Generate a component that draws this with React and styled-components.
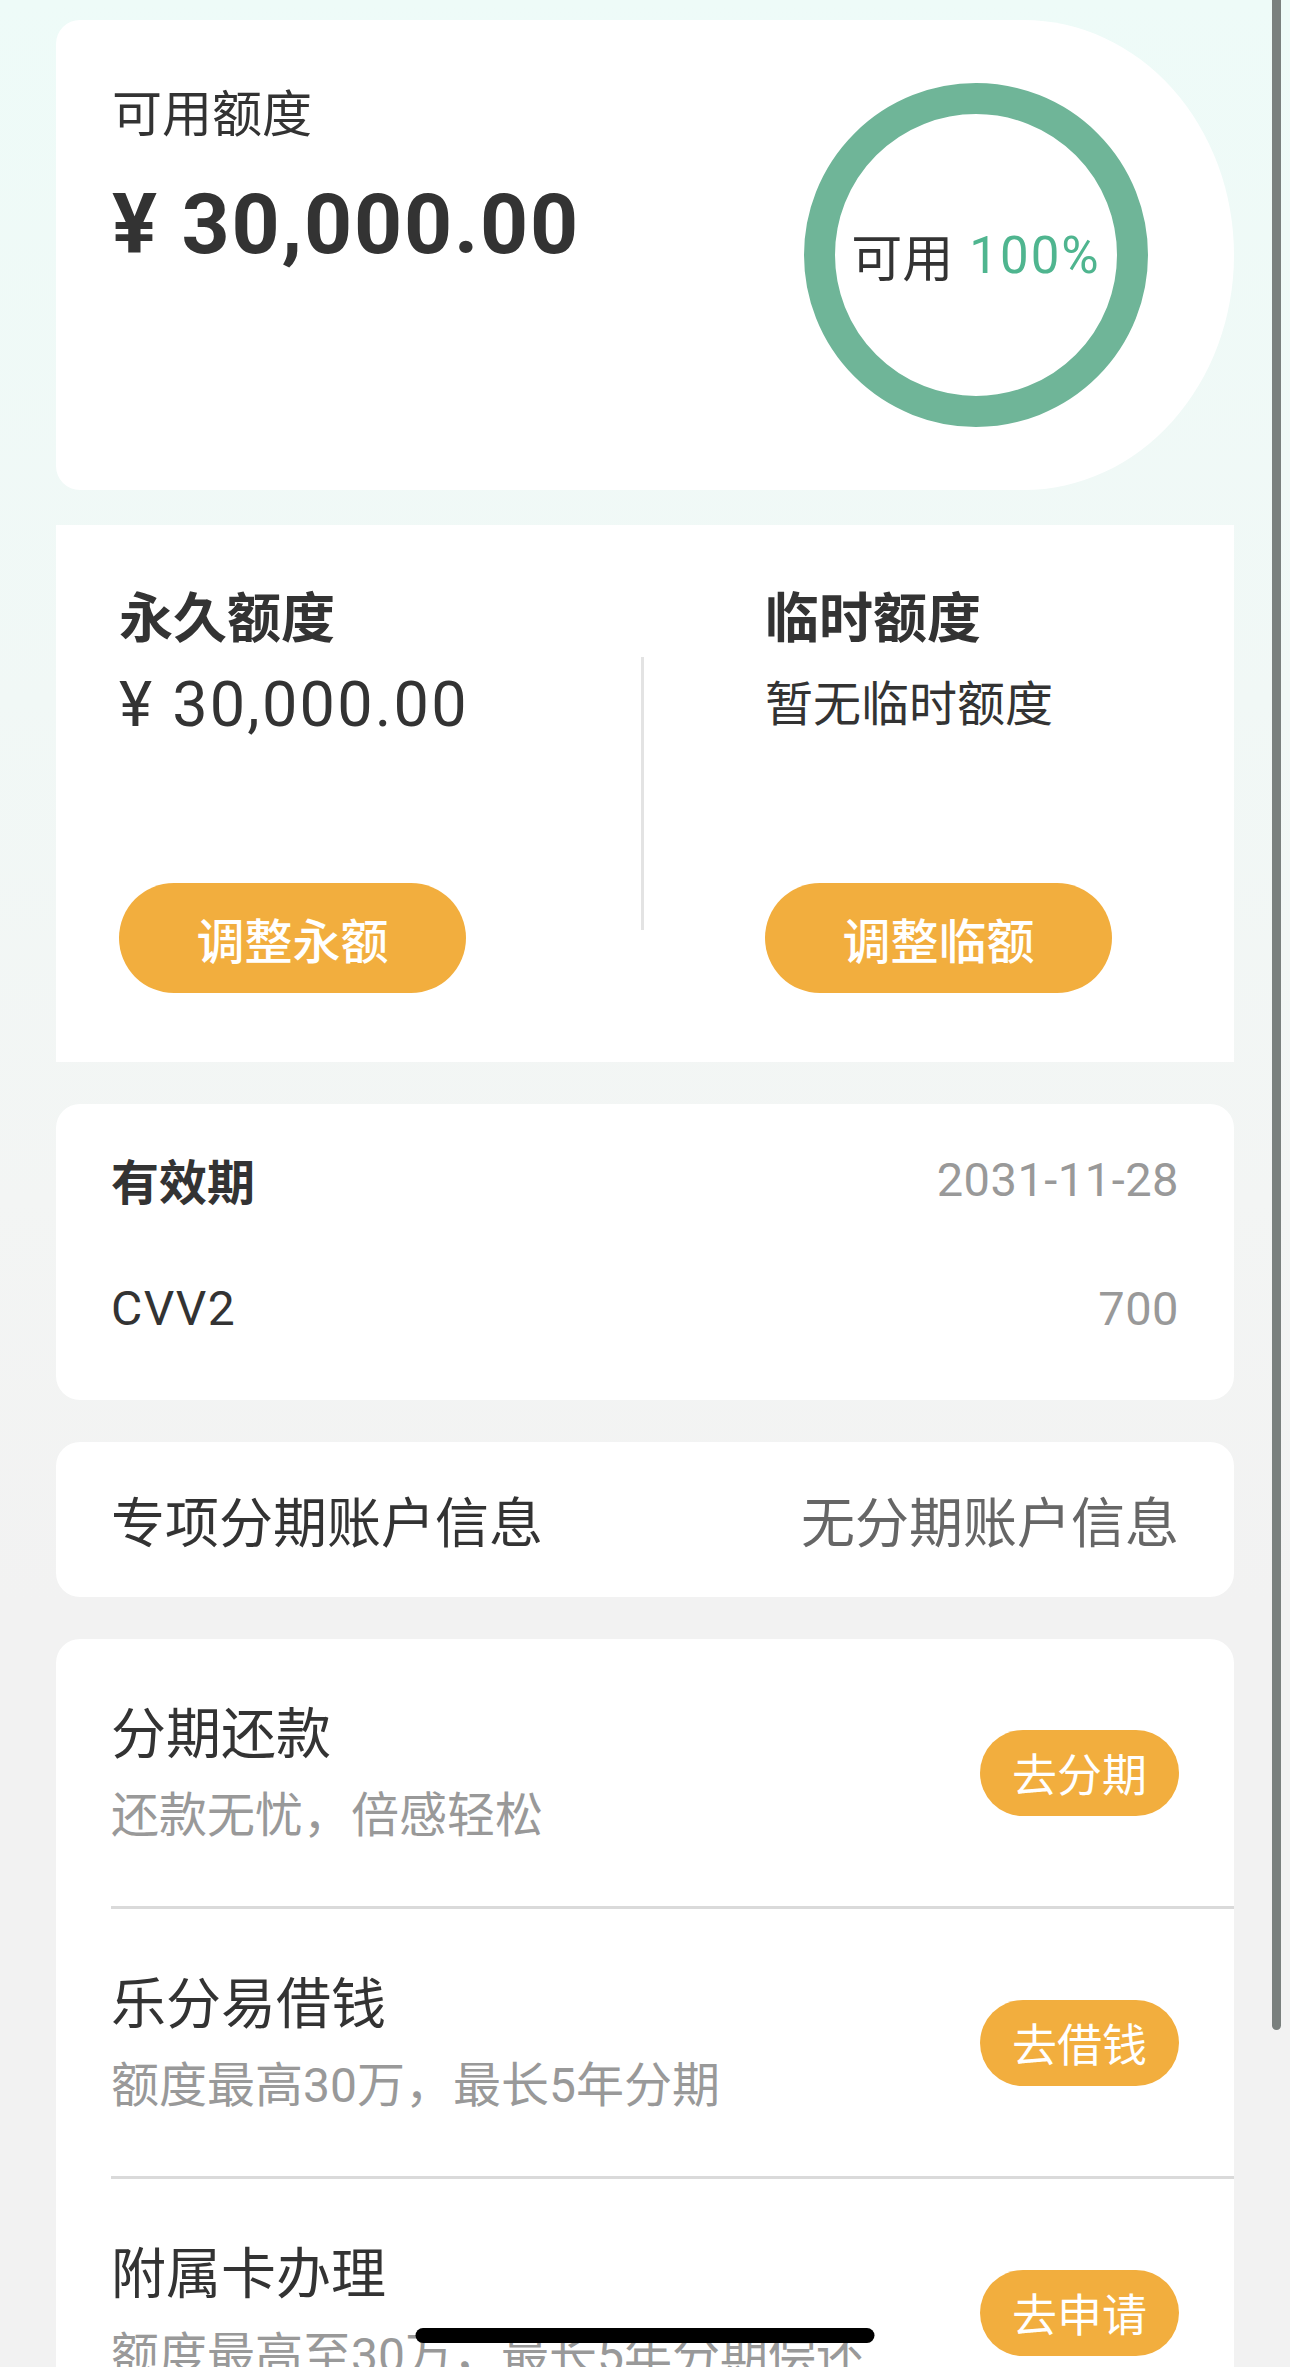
import React from "react";
import styled, { createGlobalStyle } from "styled-components";

const GlobalStyle = createGlobalStyle`
  html, body {
    margin: 0;
    padding: 0;
  }
  body {
    background: #f2f2f2;
    font-family: Roboto, "Noto Sans CJK SC", sans-serif;
    color: #333333;
  }
`;

const ORANGE = "#f2ae3e";

const Page = styled.div`
  position: relative;
  height: 100vh;
  overflow: hidden;
  box-sizing: border-box;
  padding: 20px 56px 0;
  background: linear-gradient(180deg, #eefbf8 0px, #f1f8f6 700px, #f3f5f4 1200px, #f2f2f2 1600px);
`;

const Overview = styled.section`
  height: 470px;
  box-sizing: border-box;
  background: #ffffff;
  border-radius: 24px 210px 210px 24px / 24px 235px 235px 24px;
  display: flex;
  align-items: center;
  justify-content: space-between;
  padding: 0 86px 0 56px;
`;

const OverviewText = styled.div`
  align-self: flex-start;
  padding-top: 60px;
`;

const Label = styled.div`
  font-size: 50px;
  line-height: 70px;
  color: #333333;
`;

const BigAmount = styled.div`
  margin-top: 25px;
  font-size: 84px;
  line-height: 100px;
  font-weight: 700;
  letter-spacing: 1.8px;
  color: #333333;
`;

const Ring = styled.div`
  width: 344px;
  height: 344px;
  box-sizing: border-box;
  border: 31px solid #6fb598;
  border-radius: 50%;
  display: flex;
  align-items: center;
  justify-content: center;
  font-size: 51px;
  color: #333333;
`;

const Percent = styled.span`
  color: #4fb58f;
  margin-left: 16px;
  letter-spacing: 2px;
`;

const LimitCard = styled.section`
  margin-top: 35px;
  height: 537px;
  background: #ffffff;
  display: grid;
  grid-template-columns: 585px 3px 1fr;
  align-items: center;
`;

const LimitColumn = styled.div`
  align-self: stretch;
  display: flex;
  flex-direction: column;
  align-items: flex-start;
  box-sizing: border-box;
  padding: 57px 0 0 ${(p) => p.$inset}px;
`;

const ColTitle = styled.div`
  font-size: 54px;
  line-height: 76px;
  font-weight: 700;
  color: #333333;
`;

const ColValue = styled.div`
  margin-top: 9px;
  font-size: ${(p) => p.$size}px;
  line-height: 76px;
  letter-spacing: ${(p) => p.$spacing || 0}px;
  color: #333333;
`;

const AdjustButton = styled.button`
  margin-top: 140px;
  width: 347px;
  height: 110px;
  border: none;
  border-radius: 55px;
  background: ${ORANGE};
  color: #ffffff;
  font-family: inherit;
  font-size: 48px;
  font-weight: 500;
  padding: 0;
`;

const VSep = styled.div`
  width: 3px;
  height: 273px;
  background: #e3e3e3;
`;

const InfoCard = styled.section`
  margin-top: 42px;
  background: #ffffff;
  border-radius: 24px;
  padding: 40px 55px 57px;
  display: flex;
  flex-direction: column;
  gap: 59px;
`;

const InfoRow = styled.div`
  height: 70px;
  display: flex;
  align-items: center;
  justify-content: space-between;
`;

const InfoLabel = styled.span`
  font-size: 48px;
  font-weight: ${(p) => (p.$strong ? 700 : 400)};
  letter-spacing: ${(p) => (p.$strong ? 0 : 1.5)}px;
  color: #333333;
`;

const InfoValue = styled.span`
  font-size: 47px;
  letter-spacing: 0.5px;
  color: #999999;
`;

const AccountCard = styled.section`
  margin-top: 42px;
  height: 155px;
  box-sizing: border-box;
  background: #ffffff;
  border-radius: 24px;
  padding: 0 55px;
  display: flex;
  align-items: center;
  justify-content: space-between;
  font-size: 54px;
  color: #333333;
`;

const AccountValue = styled.span`
  color: #666666;
`;

const ServiceCard = styled.section`
  margin-top: 42px;
  background: #ffffff;
  border-radius: 24px;
`;

const ServiceRow = styled.div`
  margin-left: 55px;
  padding-right: 55px;
  height: 267px;
  border-bottom: 3px solid #dadada;
  display: flex;
  align-items: center;
  justify-content: space-between;
`;

const ServiceTitle = styled.div`
  font-size: 55px;
  line-height: 74px;
  color: #333333;
`;

const ServiceDesc = styled.div`
  margin-top: 13px;
  font-size: 48px;
  line-height: 64px;
  color: #999999;
`;

const GoButton = styled.button`
  width: 199px;
  height: 86px;
  border: none;
  border-radius: 43px;
  background: ${ORANGE};
  color: #ffffff;
  font-family: inherit;
  font-size: 45px;
  padding: 0;
`;

const ScrollIndicator = styled.div`
  position: absolute;
  top: 0;
  right: 9px;
  width: 9px;
  height: 2030px;
  border-radius: 0 0 5px 5px;
  background: #7a807e;
`;

const HomeBar = styled.div`
  position: absolute;
  bottom: 24px;
  left: 50%;
  transform: translateX(-50%);
  width: 459px;
  height: 15px;
  border-radius: 8px;
  background: #000000;
`;

const services = [
  { title: "分期还款", desc: "还款无忧，倍感轻松", action: "去分期" },
  { title: "乐分易借钱", desc: "额度最高30万，最长5年分期", action: "去借钱" },
  { title: "附属卡办理", desc: "额度最高至30万，最长5年分期偿还", action: "去申请" },
];

export default function App() {
  return (
    <>
      <GlobalStyle />
      <Page>
        <Overview>
          <OverviewText>
            <Label>可用额度</Label>
            <BigAmount>¥ 30,000.00</BigAmount>
          </OverviewText>
          <Ring>
            可用<Percent>100%</Percent>
          </Ring>
        </Overview>

        <LimitCard>
          <LimitColumn $inset={63}>
            <ColTitle>永久额度</ColTitle>
            <ColValue $size={63} $spacing={2.2}>¥ 30,000.00</ColValue>
            <AdjustButton>调整永额</AdjustButton>
          </LimitColumn>
          <VSep />
          <LimitColumn $inset={121}>
            <ColTitle>临时额度</ColTitle>
            <ColValue $size={48}>暂无临时额度</ColValue>
            <AdjustButton>调整临额</AdjustButton>
          </LimitColumn>
        </LimitCard>

        <InfoCard>
          <InfoRow>
            <InfoLabel $strong>有效期</InfoLabel>
            <InfoValue>2031-11-28</InfoValue>
          </InfoRow>
          <InfoRow>
            <InfoLabel>CVV2</InfoLabel>
            <InfoValue>700</InfoValue>
          </InfoRow>
        </InfoCard>

        <AccountCard>
          <span>专项分期账户信息</span>
          <AccountValue>无分期账户信息</AccountValue>
        </AccountCard>

        <ServiceCard>
          {services.map((s) => (
            <ServiceRow key={s.title}>
              <div>
                <ServiceTitle>{s.title}</ServiceTitle>
                <ServiceDesc>{s.desc}</ServiceDesc>
              </div>
              <GoButton>{s.action}</GoButton>
            </ServiceRow>
          ))}
        </ServiceCard>

        <ScrollIndicator />
        <HomeBar />
      </Page>
    </>
  );
}
